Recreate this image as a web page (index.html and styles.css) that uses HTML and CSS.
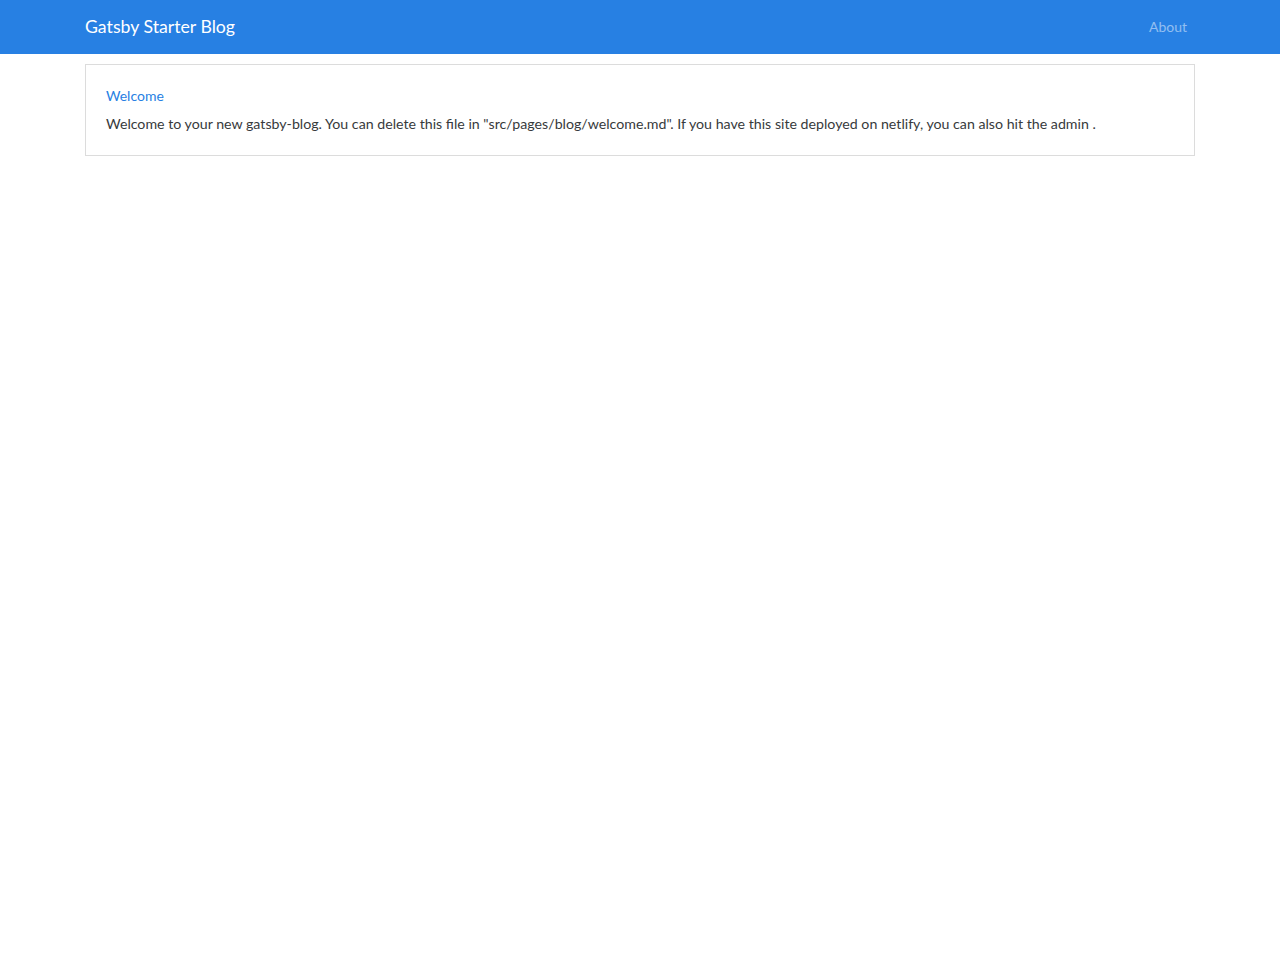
FILE: index.html
```html
<!DOCTYPE html>
<html lang="en">
<head>
    <meta charset="UTF-8">
    <meta name="viewport" content="width=device-width, initial-scale=1.0">
    <title>Gatsby Starter Blog</title>
    <link rel="stylesheet" href="styles.css">
</head>
<body>
    <nav class="navbar">
        <div class="container nav-inner">
            <a class="brand" href="#">Gatsby Starter Blog</a>
            <a class="nav-link" href="#">About</a>
        </div>
    </nav>
    <div class="container">
        <div class="card">
            <a class="card-title" href="#">Welcome</a>
            <p class="card-text">Welcome to your new gatsby-blog. You can delete this file in "src/pages/blog/welcome.md". If you have this site deployed on netlify, you can also hit the admin .</p>
        </div>
    </div>
</body>
</html>
```

FILE: styles.css
```css
* {
    padding: 0;
    margin: 0;
    box-sizing: border-box;
}

body {
    font-family: Lato, "Noto Sans", sans-serif;
    font-size: 14.2px;
    color: #373a3c;
    background: #fff;
}

a {
    text-decoration: none;
}

.container {
    width: 1110px;
    margin: 0 auto;
}

.navbar {
    background: #2780e3;
    height: 54px;
}

.nav-inner {
    height: 54px;
    display: flex;
    align-items: center;
    justify-content: space-between;
}

.brand {
    color: #fff;
    font-size: 17.7px;
    margin-top: -2px;
}

.nav-link {
    color: rgba(255, 255, 255, 0.5);
    font-size: 14px;
    padding: 8px;
    margin-top: -2px;
}

.card {
    margin-top: 10px;
    border: 1px solid #dcdcdc;
    padding: 20px;
}

.card-title {
    display: block;
    color: #2780e3;
    font-size: 14px;
    line-height: 22px;
    margin-bottom: 6px;
}

.card-text {
    line-height: 22px;
}
```
